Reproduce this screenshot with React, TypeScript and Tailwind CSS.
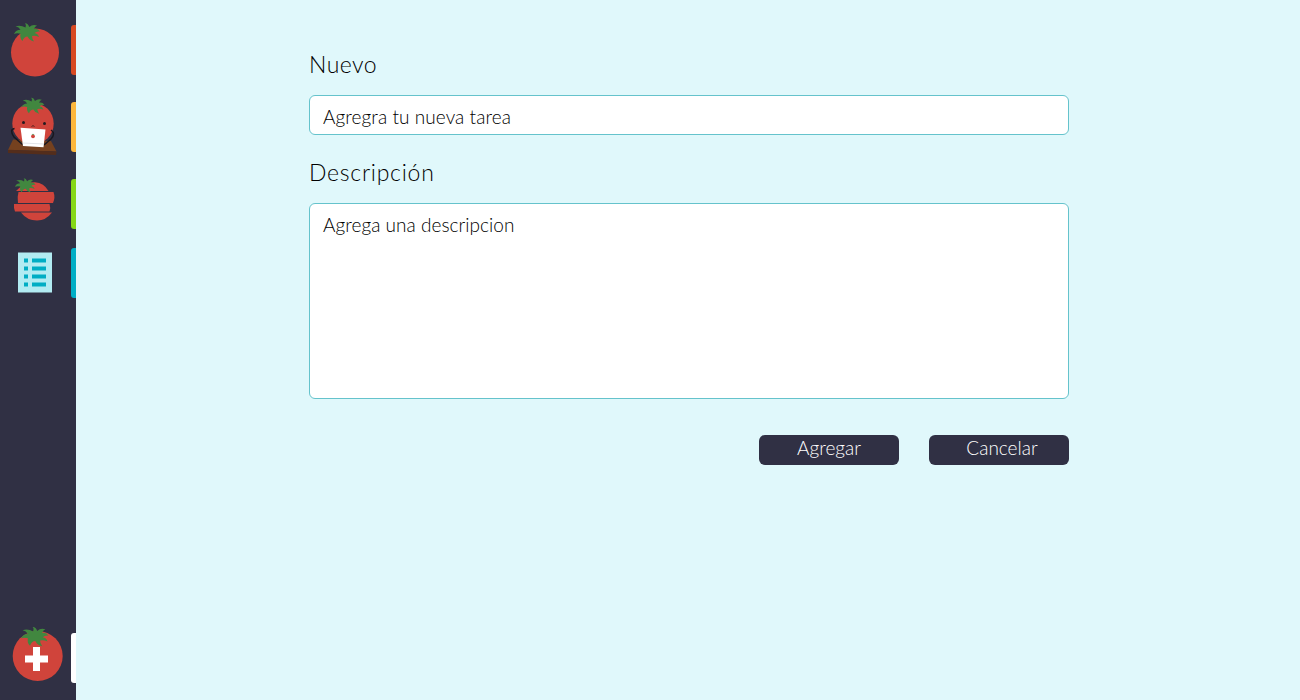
import type { ReactNode } from "react";

function NavItem({ box, size, tab, label, children }: { box: string; size: string; tab: string; label: string; children: ReactNode }) {
  return (
    <button aria-label={label} className="flex w-full shrink-0 items-center">
      <svg viewBox={box} className={`w-[71px] shrink-0 ${size}`}>
        {children}
      </svg>
      <span className={`h-[50px] w-[5px] rounded-l-[3px] ${tab}`} />
    </button>
  );
}

function Leaf({ x, y, s = 1 }: { x: number; y: number; s?: number }) {
  return (
    <path
      transform={`translate(${x} ${y}) scale(${s})`}
      fill="#41873f"
      d="M1.500 3.300 Q6.500 1.500 11.500 4.500 Q12.500 1.500 11 0.200 Q14 0 15.300 4 Q18.500 1 23 2.500 Q20.500 3.800 20 6 Q24 5 26 8.500 Q22.500 8 20.500 10 Q24 10.500 25 14 Q21.500 12.300 18 13 Q18 15.500 20 18.500 Q15.500 17.500 13.500 13.500 Q10 13.500 8.500 18 Q5.500 15 6.500 10.800 Q3 9.800 0 11 Q2 6.800 6.500 6.800 Q5 4 1.500 3.300Z"
    />
  );
}

export default function App() {
  return (
    <div className="flex h-screen min-h-[700px] bg-[#e0f8fb] font-['Lato','Open_Sans',sans-serif] font-light text-black">
      <nav className="flex w-[76px] shrink-0 flex-col bg-[#303044] pt-[15px] pb-[7px]">
        <NavItem label="Pomodoro" box="0 15 71 70" size="h-[70px]" tab="bg-[#d84a22]">
          <circle cx="35" cy="52.500" r="24" fill="#d0443b" />
          <Leaf x={14} y={23} />
        </NavItem>
        <div className="mt-[7px] flex">
          <NavItem label="Trabajo" box="0 92 71 70" size="h-[70px]" tab="bg-[#fcb73c]">
            <path d="M13 139.500 L51 141 L56.500 151.500 L8 150Z" fill="#75411f" />
            <path d="M8 149.700 L56.500 151.500 L56 155 L8 153Z" fill="#542d1b" />
            <circle cx="33" cy="123.500" r="20.700" fill="#d0443b" />
            <Leaf x={21.5} y={97.5} s={0.88} />
            <circle cx="23.500" cy="122.500" r="1.500" fill="#261b20" />
            <circle cx="44.500" cy="123.500" r="1.500" fill="#261b20" />
            <path d="M31.500 126.500 Q33 124.800 34.500 126.500" fill="none" stroke="#54211f" />
            <path d="M14.500 128.500 Q9 129.500 14 137 L22.500 144.500 M51 130 Q56 133.500 51 139 L44 145" fill="none" stroke="#19171f" strokeWidth="1.500" />
            <path d="M20.500 127.700 L45.500 129.500 L43.500 147.300 L23 146Z" fill="#fff" />
            <path d="M22.500 143 L44 144" stroke="#d6d8de" strokeWidth="0.700" />
            <circle cx="33" cy="136.300" r="1.900" fill="#d0443b" />
            <path d="M31.500 134.700 L33 133.700 L34.500 134.700Z" fill="#41873f" />
          </NavItem>
        </div>
        <div className="mt-[7px] flex">
          <NavItem label="Descanso" box="0 169 71 70" size="h-[70px]" tab="bg-[#86d817]">
            <path d="M16 191 Q24 182 35 182.300 Q44 183 48.500 191Z" fill="#d0443b" />
            <path d="M18.500 192 L53.500 192 Q55.500 197.500 53 203 L18 203 Q17 197 18.500 192Z" fill="#d0443b" />
            <path d="M14 204 L49.500 204 Q51 208 49.500 211.500 L15 211.500 Q13.500 208 14 204Z" fill="#d0443b" />
            <path d="M21 212.500 L52 212.500 Q46 220.500 37 220.500 Q27 220.500 21 212.500Z" fill="#d0443b" />
            <Leaf x={15} y={178} s={0.79} />
          </NavItem>
        </div>
        <div className="mt-[9px] flex">
          <NavItem label="Tareas" box="0 248 71 50" size="h-[50px]" tab="bg-[#00aec5]">
            <rect x="18" y="252.500" width="34" height="40" fill="#b2ebf2" />
            <path d="M24 260.500h4M32 260.500h14M24 268.500h4M32 268.500h14M24 276.500h4M32 276.500h14M24 284.500h4M32 284.500h14" stroke="#00adc4" strokeWidth="4" />
          </NavItem>
        </div>
        <div className="mt-auto flex">
          <NavItem label="Nueva tarea" box="0 623 71 70" size="h-[70px]" tab="bg-white">
            <circle cx="37.700" cy="656" r="25" fill="#d0443b" />
            <Leaf x={21} y={626.7} s={1.06} />
            <path d="M33 647h7v8.500h8v7h-8v8.500h-7v-8.500h-8v-7h8Z" fill="#fff" />
          </NavItem>
        </div>
      </nav>
      <main className="flex flex-1 justify-center pt-[46px]">
        <form className="mr-[-2px] flex w-[760px] flex-col">
          <label htmlFor="task" className="h-9 text-[23px] leading-9 tracking-[0.5px]">Nuevo</label>
          <input id="task" placeholder="Agregra tu nueva tarea" className="mt-[13px] h-10 rounded-md border border-[#65c3cc] bg-white px-[13px] pt-[3px] text-[19px] tracking-[0.08px] outline-none placeholder:text-black" />
          <label htmlFor="description" className="mt-[19px] h-9 text-[23px] leading-9 tracking-[0.75px]">Descripción</label>
          <textarea id="description" placeholder="Agrega una descripcion" className="mt-[13px] h-[196px] resize-none rounded-md border border-[#65c3cc] bg-white px-[13px] pt-[9px] text-[19px] leading-6 tracking-[0.04px] outline-none placeholder:text-black" />
          <div className="mt-9 flex justify-end gap-[30px]">
            <button type="button" className="h-[30px] w-[140px] rounded-md bg-[#303044] pb-[4px] text-[19px] leading-[26px] text-white">Agregar</button>
            <button type="button" className="h-[30px] w-[140px] rounded-md bg-[#303044] pb-[4px] pl-[6px] text-[19px] leading-[26px] text-white">Cancelar</button>
          </div>
        </form>
      </main>
    </div>
  );
}
